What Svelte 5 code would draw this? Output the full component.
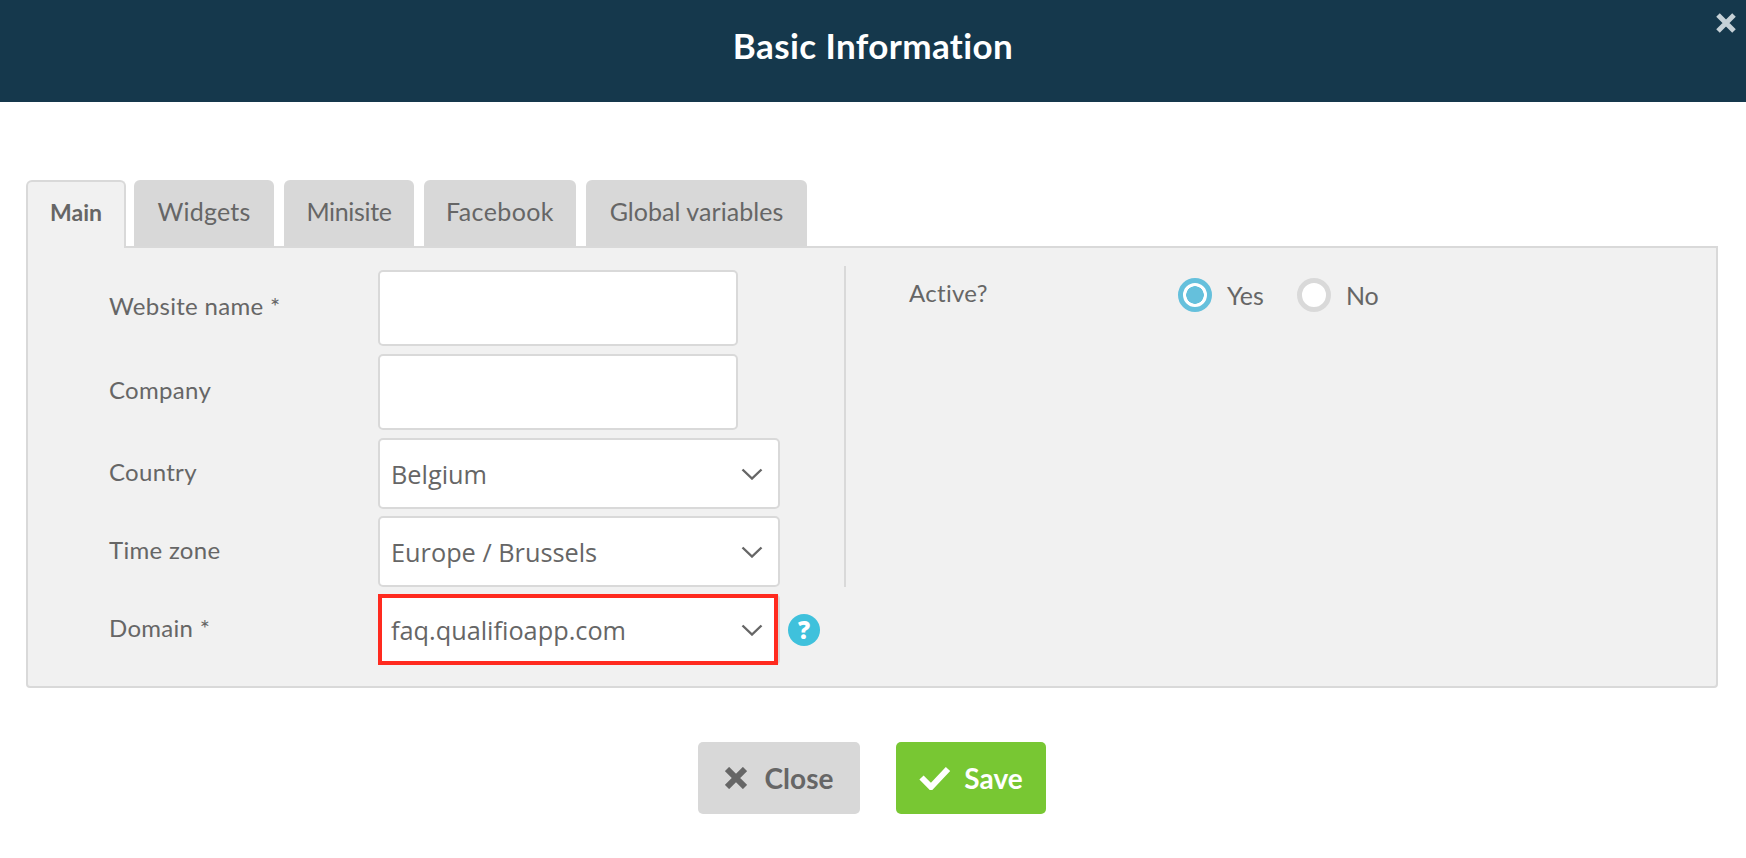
<script>
  const tabs = ['Main', 'Widgets', 'Minisite', 'Facebook', 'Global variables'];
  const rows = [
    { label: 'Website name *', kind: 'input' },
    { label: 'Company', kind: 'input' },
    { label: 'Country', kind: 'select', value: 'Belgium' },
    { label: 'Time zone', kind: 'select', value: 'Europe / Brussels' }
  ];
</script>

<div class="modal">
  <header class="head">
    <h1>Basic Information</h1>
    <button class="dismiss" aria-label="Dismiss">
      <svg viewBox="0 0 20 20" width="20" height="20"><path d="M2 2l16 16M18 2L2 18" /></svg>
    </button>
  </header>

  <main class="body">
    <nav class="tabs">
      {#each tabs as tab, i}
        <div class="tab" class:active={i === 0}>{tab}</div>
      {/each}
    </nav>

    <section class="panel">
      <div class="top">
        <div class="fields">
          {#each rows as row}
            <div class="row" class:selrow={row.kind === 'select'}>
              <span class="label">{row.label}</span>
              {#if row.kind === 'input'}
                <div class="input"></div>
              {:else}
                <div class="select">
                  <span>{row.value}</span>
                  <svg class="chev" viewBox="0 0 22 12" width="22" height="12"><path d="M1.5 1.5l9.5 9 9.5-9" /></svg>
                </div>
              {/if}
            </div>
          {/each}
        </div>
        <div class="side">
          <span class="label activel">Active?</span>
          <div class="radios">
            <span class="radio on"></span><span class="rtext">Yes</span>
            <span class="radio"></span><span class="rtext">No</span>
          </div>
        </div>
      </div>

      <div class="row domain">
        <span class="label">Domain *</span>
        <div class="select hl">
          <span>faq.qualifioapp.com</span>
          <svg class="chev" viewBox="0 0 22 12" width="22" height="12"><path d="M1.5 1.5l9.5 9 9.5-9" /></svg>
        </div>
        <span class="help">?</span>
      </div>
    </section>

    <div class="actions">
      <button class="btn close">
        <svg viewBox="0 0 22 22" width="22" height="22"><path d="M2 2l18 18M20 2L2 20" /></svg>
        Close
      </button>
      <button class="btn save">
        <svg viewBox="0 0 32 24" width="32" height="24"><path d="M2.5 11.5l9.5 9.5L29 3" /></svg>
        Save
      </button>
    </div>
  </main>
</div>

<style>
  :global(body) { margin: 0; background: #fff; }
  .modal { font-family: Lato, "Liberation Sans", sans-serif; color: #666; width: 1746px; height: 858px; overflow: hidden; }
  .head { position: relative; height: 102px; background: #15384c; display: flex; align-items: center; justify-content: center; }
  h1 { margin: 0 0 13px; color: #fff; font-size: 35px; font-weight: 700; letter-spacing: 0.4px; }
  .dismiss { position: absolute; top: 13px; right: 10px; padding: 0; border: 0; background: none; width: 20px; height: 20px; }
  .dismiss svg { display: block; }
  .dismiss path { stroke: #c6d1d7; stroke-width: 5; fill: none; }
  .body { padding: 78px 28px 0 26px; }
  .tabs { display: flex; gap: 10px; height: 68px; }
  .tab { box-sizing: border-box; height: 66px; background: #d8d8d8; border-radius: 6px 6px 0 0; font-size: 25px; letter-spacing: 0.2px; line-height: 62px; text-align: center; white-space: nowrap; }
  .tab:nth-child(2) { width: 140px; }
  .tab:nth-child(3) { width: 130px; letter-spacing: -0.35px; }
  .tab:nth-child(4) { width: 152px; letter-spacing: 0.4px; }
  .tab:nth-child(5) { width: 221px; letter-spacing: 0.05px; }
  .tab.active { width: 100px; height: 68px; margin-right: -2px; background: #f1f1f1; border: 2px solid #d9d9d9; border-bottom: 0; font-size: 23px; letter-spacing: 0; font-weight: 700; line-height: 60px; position: relative; z-index: 1; }
  .panel { box-sizing: border-box; height: 442px; margin-top: -2px; background: #f1f1f1; border: 2px solid #d9d9d9; border-radius: 0 0 4px 4px; padding-top: 18px; }
  .top { display: flex; }
  .fields { box-sizing: border-box; width: 818px; height: 321px; padding: 4px 0 0 81px; border-right: 2px solid #d9d9d9; }
  .row { display: grid; grid-template-columns: 269px auto; align-items: center; margin-bottom: 8px; }
  .row.selrow { margin-bottom: 7px; }
  .label { font-size: 24px; letter-spacing: 0.3px; padding-bottom: 5px; }
  .input { box-sizing: border-box; width: 360px; height: 76px; background: #fff; border: 2px solid #d9d9d9; border-radius: 5px; }
  .select { box-sizing: border-box; width: 402px; height: 71px; background: #fff; border: 2px solid #d9d9d9; border-radius: 5px; display: flex; align-items: center; justify-content: space-between; padding: 1px 15px 0 11px; font-family: "Open Sans", sans-serif; font-size: 25.3px; }
  .chev { margin-top: -1px; }
  .chev path { fill: none; stroke: #666; stroke-width: 2.4; }
  .domain { grid-template-columns: 269px 402px auto; margin: 7px 0 0 81px; }
  .select.hl { position: relative; }
  .select.hl::after { content: ""; position: absolute; top: -2px; left: -2px; right: 0; bottom: -2px; border: 4px solid #ff2a1f; }
  .help { width: 32px; height: 32px; margin-left: 8px; border-radius: 50%; background: #3fc1dc; color: #fff; font-weight: 800; font-size: 24px; line-height: 32px; text-align: center; font-family: "Open Sans", sans-serif; }
  .side { display: grid; grid-template-columns: 269px auto; padding: 12px 0 0 63px; align-items: start; }
  .activel { line-height: 30px; padding: 0; }
  .radios { display: flex; align-items: center; }
  .radio { box-sizing: border-box; width: 34px; height: 34px; border-radius: 50%; border: 5px solid #d9d9d9; background: #fff; }
  .radio.on { border-color: #65c0dc; background: radial-gradient(circle, #65c0dc 0 8.5px, #fff 9px); }
  .rtext { font-size: 25px; margin: 0 33px 0 15px; }
  .actions { display: flex; justify-content: center; gap: 36px; margin-top: 54px; }
  .btn { box-sizing: border-box; height: 72px; border: 0; border-radius: 5px; display: flex; align-items: center; justify-content: center; font-family: Lato, sans-serif; font-size: 28px; font-weight: 700; padding: 0; }
  .btn path { fill: none; stroke-width: 6; }
  .close { gap: 18px; width: 162px; background: #d8d8d8; color: #666; }
  .close path { stroke: #666; }
  .save { gap: 13px; width: 150px; background: #78c733; color: #fff; }
  .save path { stroke: #fff; }
</style>
